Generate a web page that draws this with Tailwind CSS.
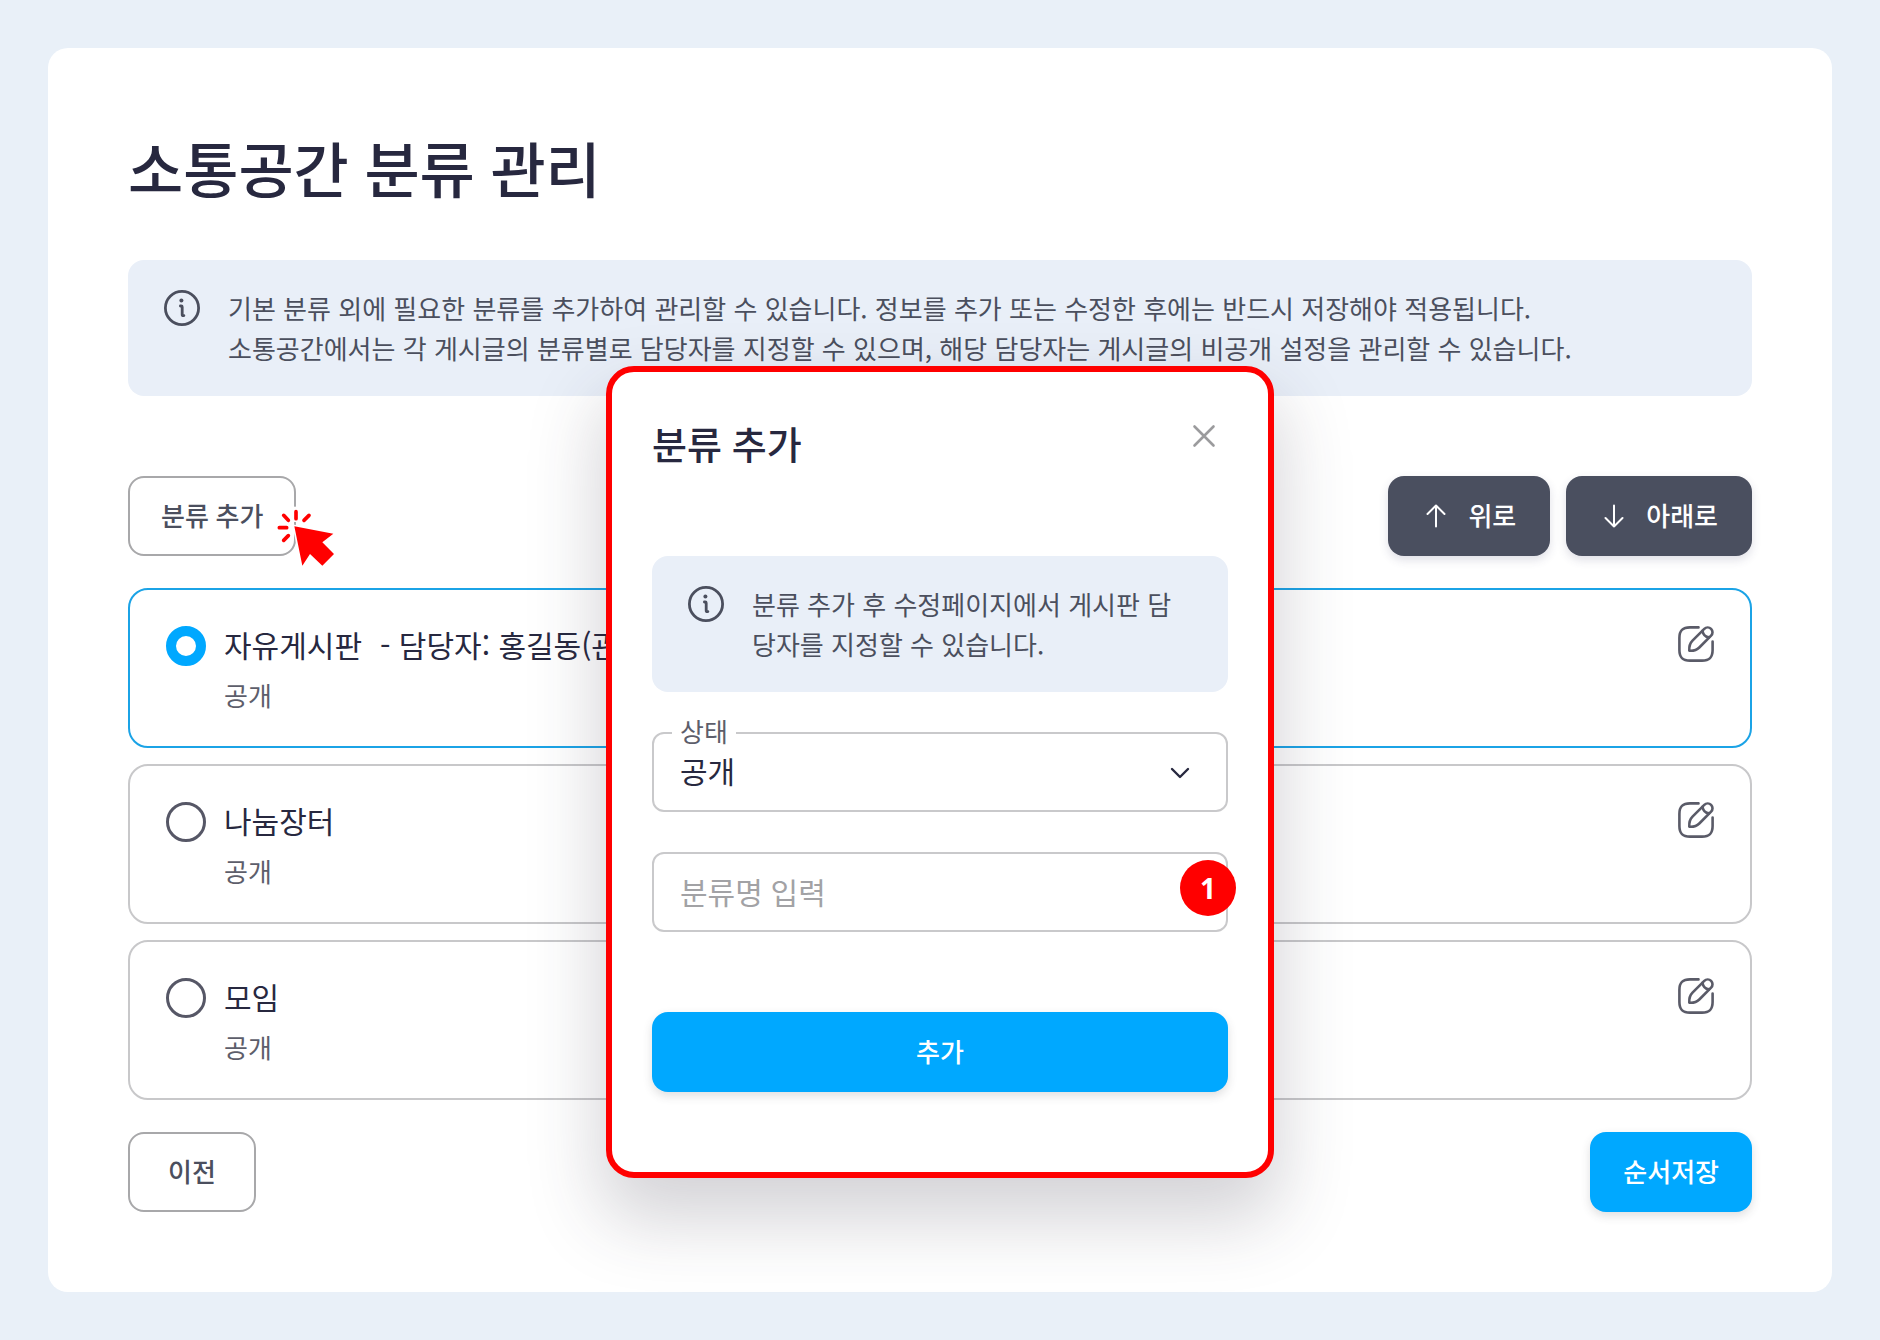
<!DOCTYPE html>
<html lang="ko">

<head>
  <meta charset="UTF-8">
  <meta name="viewport" content="width=device-width, initial-scale=1.0">
  <title>소통공간 분류 관리</title>
  <script src="https://cdn.jsdelivr.net/npm/@tailwindcss/browser@4"></script>
</head>

<body class="relative min-h-screen bg-[#e9f0f8] p-12 font-['Noto_Sans','Noto_Sans_CJK_KR',sans-serif] text-[26px] leading-10 text-[#4b4f5e]">
  <svg class="hidden">
    <symbol id="icon-info" viewBox="0 0 36 36" fill="none" stroke="currentColor" stroke-linecap="round" stroke-linejoin="round">
      <circle cx="18" cy="18" r="16.6" stroke-width="2.8" />
      <path d="M16.4 16h.8q1 0 1 1v7.400q0 1.200 1.200 1.200h.5" stroke-width="2.8" />
      <circle cx="17.4" cy="10.4" r="2" fill="currentColor" stroke="none" />
    </symbol>
    <symbol id="icon-edit" viewBox="0 0 36 36" fill="none" stroke="currentColor" stroke-width="2.6" stroke-linecap="round" stroke-linejoin="round">
      <path d="M20.500 1.400H12C4.500 1.400 1.400 4.500 1.400 12v12c0 7.500 3.100 10.600 10.600 10.600h12c7.500 0 10.600-3.100 10.600-10.600v-8.500" />
      <path d="M26.300 2.900 14.500 14.700C12 17.200 11 20.500 11.300 24.700c4.200.3 7.500-.7 10-3.200L33.100 9.700a4.800 4.800 0 0 0-6.800-6.800Z" />
      <path d="M24.500 4.900c.6 3.400 3 5.900 6.500 6.500" />
    </symbol>
  </svg>

  <main class="rounded-[20px] bg-white p-20">
    <h1 class="mb-12 text-6xl leading-[84px] font-medium text-[#27283f]">소통공간 분류 관리</h1>

    <div class="mb-20 flex gap-7 rounded-2xl bg-[#e9eff8] px-9 py-7">
      <svg class="mt-0.5 size-9 shrink-0"><use href="#icon-info" /></svg>
      <p class="font-['Noto_Sans_CJK_KR',sans-serif]">기본 분류 외에 필요한 분류를 추가하여 관리할 수 있습니다. 정보를 추가 또는 수정한 후에는 반드시 저장해야 적용됩니다.<br>소통공간에서는 각 게시글의 분류별로 담당자를 지정할 수 있으며, 해당 담당자는 게시글의 비공개 설정을 관리할 수 있습니다.</p>
    </div>

    <div class="mb-8 flex items-center justify-between">
      <div class="relative">
        <button class="h-20 rounded-2xl border-2 border-[#a8a8aa] px-[31px] font-medium">분류 추가</button>
        <!-- click pointer -->
        <svg class="absolute top-3.5 left-33 size-[90px]" viewBox="0 0 270 270">
          <path d="M103 109 220 131 187 157 222 192 187 227 150 192 127 227Z" fill="#f00" stroke="#fff" stroke-width="10" paint-order="stroke" />
          <path d="M108 50v46" stroke="#fff" stroke-width="24" />
          <path d="M108 65v21M147 76l-15 15M71 76l14 15M58 113h22M71 151l14-14" stroke="#f00" stroke-width="11" stroke-linecap="round" />
        </svg>
      </div>
      <div class="flex gap-4">
        <button class="flex h-20 items-center gap-4 rounded-2xl bg-[#4a4f5f] pr-[34px] pl-8 font-medium text-white shadow-[0_4px_10px_rgb(58_53_100/0.16)]">
          <svg class="size-8" viewBox="0 0 32 32" fill="none" stroke="currentColor" stroke-width="2" stroke-linecap="round" stroke-linejoin="round"><path d="M16 26.500V5.500M7.500 14 16 5.500l8.500 8.500" /></svg>
          위로
        </button>
        <button class="flex h-20 items-center gap-4 rounded-2xl bg-[#4a4f5f] pr-[34px] pl-8 font-medium text-white shadow-[0_4px_10px_rgb(58_53_100/0.16)]">
          <svg class="size-8" viewBox="0 0 32 32" fill="none" stroke="currentColor" stroke-width="2" stroke-linecap="round" stroke-linejoin="round"><path d="M16 5.500v21M7.500 18l8.500 8.500 8.500-8.500" /></svg>
          아래로
        </button>
      </div>
    </div>

    <ul class="mb-8 flex flex-col gap-4">
      <li class="flex h-40 items-start gap-[18px] rounded-[20px] border-2 border-[#1ba3e6] p-9">
        <input type="radio" name="category" id="category-1" checked
          class="size-10 shrink-0 appearance-none rounded-full border-[3px] border-[#565766] checked:border-10 checked:border-[#00a8ff]">
        <label for="category-1" class="flex grow flex-col gap-3.5">
          <span class="flex gap-[18px] font-['Noto_Sans_CJK_KR',sans-serif] text-3xl leading-9 text-[#27283f]"><span>자유게시판</span><span>- 담당자: 홍길동(관리자)</span></span>
          <span class="text-[#5d5e6b]">공개</span>
        </label>
        <button aria-label="수정" class="text-[#5a5b68]"><svg class="size-9"><use href="#icon-edit" /></svg></button>
      </li>
      <li class="flex h-40 items-start gap-[18px] rounded-[20px] border-2 border-[#c8c8ca] p-9">
        <input type="radio" name="category" id="category-2"
          class="size-10 shrink-0 appearance-none rounded-full border-[3px] border-[#565766] checked:border-10 checked:border-[#00a8ff]">
        <label for="category-2" class="flex grow flex-col gap-3.5">
          <span class="font-['Noto_Sans_CJK_KR',sans-serif] text-3xl leading-9 text-[#27283f]">나눔장터</span>
          <span class="text-[#5d5e6b]">공개</span>
        </label>
        <button aria-label="수정" class="text-[#5a5b68]"><svg class="size-9"><use href="#icon-edit" /></svg></button>
      </li>
      <li class="flex h-40 items-start gap-[18px] rounded-[20px] border-2 border-[#c8c8ca] p-9">
        <input type="radio" name="category" id="category-3"
          class="size-10 shrink-0 appearance-none rounded-full border-[3px] border-[#565766] checked:border-10 checked:border-[#00a8ff]">
        <label for="category-3" class="flex grow flex-col gap-3.5">
          <span class="font-['Noto_Sans_CJK_KR',sans-serif] text-3xl leading-9 text-[#27283f]">모임</span>
          <span class="text-[#5d5e6b]">공개</span>
        </label>
        <button aria-label="수정" class="text-[#5a5b68]"><svg class="size-9"><use href="#icon-edit" /></svg></button>
      </li>
    </ul>

    <div class="flex justify-between">
      <button class="h-20 rounded-2xl border-2 border-[#a8a8aa] px-[38px] font-medium">이전</button>
      <button class="h-20 rounded-2xl bg-[#00a8ff] px-[33px] font-medium text-white shadow-[0_4px_10px_rgb(58_53_65/0.16)]">순서저장</button>
    </div>
  </main>

  <!-- add category modal -->
  <div role="dialog" aria-labelledby="modal-title"
    class="absolute inset-x-0 top-[366px] mx-auto w-[668px] rounded-[28px] border-6 border-[#f00] bg-white px-10 pt-10 pb-20 shadow-[0_36px_72px_6px_rgb(50_48_65/0.21)]">
    <div class="mb-20 flex items-start justify-between">
      <h2 id="modal-title" class="text-[38px] leading-16 font-medium text-[#27283f]">분류 추가</h2>
      <button aria-label="닫기" class="text-[#9b9b9d]">
        <svg class="size-12" viewBox="0 0 48 48" fill="none" stroke="currentColor" stroke-width="2.6" stroke-linecap="round"><path d="m14.500 14.500 19 19M33.500 14.500l-19 19" /></svg>
      </button>
    </div>
    <div class="mb-10 flex gap-7 rounded-2xl bg-[#e9eff8] px-9 py-7">
      <svg class="mt-0.5 size-9 shrink-0"><use href="#icon-info" /></svg>
      <p class="font-['Noto_Sans_CJK_KR',sans-serif]">분류 추가 후 수정페이지에서 게시판 담당자를 지정할 수 있습니다.</p>
    </div>
    <form onsubmit="return false">
      <div class="relative mb-10">
        <label for="status" class="absolute -top-5 left-5 bg-white px-2 text-[#5d5e6b]">상태</label>
        <select id="status" class="block h-20 w-full appearance-none rounded-xl border-2 border-[#c9c9cb] bg-white px-[26px] text-3xl text-[#27283f]">
          <option>공개</option>
          <option>비공개</option>
        </select>
        <svg class="pointer-events-none absolute top-7 right-9 size-6" viewBox="0 0 24 24" fill="none" stroke="#27283f" stroke-width="2.4" stroke-linecap="round" stroke-linejoin="round"><path d="m4 9 8 8 8-8" /></svg>
      </div>
      <div class="relative mb-20">
        <input type="text" name="name" aria-label="분류명" placeholder="분류명 입력" class="block h-20 w-full rounded-xl border-2 border-[#c9c9cb] px-[26px] text-3xl placeholder:text-[#a2a2a5]">
        <span class="absolute top-2 -right-2 flex size-14 items-center justify-center rounded-full bg-[#f00] text-[28px] font-bold text-white">1</span>
      </div>
      <button class="block h-20 w-full rounded-2xl bg-[#00a8ff] font-medium text-white shadow-[0_4px_10px_rgb(58_53_65/0.16)]">추가</button>
    </form>
  </div>
</body>

</html>
